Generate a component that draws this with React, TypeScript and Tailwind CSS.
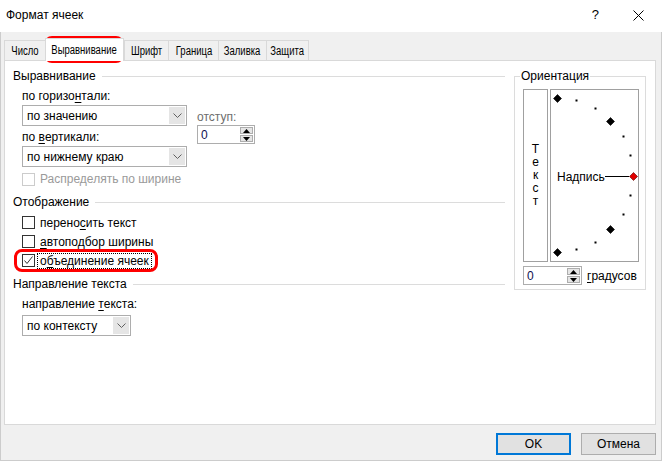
import React from "react";

function GroupHeader({ title }: { title: string }) {
  return (
    <div className="flex h-[16px] items-center">
      <span className="leading-[16px]">{title}</span>
      <div className="ml-[6px] h-px flex-1 bg-[#dcdcdc]" />
    </div>
  );
}

function Chevron() {
  return (
    <svg width="9" height="5" viewBox="0 0 9 5">
      <path d="M0.5 0.5 L4.5 4.5 L8.5 0.5" fill="none" stroke="#606060" strokeWidth="1" />
    </svg>
  );
}

function Select({ value, className }: { value: string; className: string }) {
  return (
    <div className={"flex h-[21px] border border-[#adadad] bg-white " + className}>
      <div className="flex flex-1 items-center pl-[4px] leading-none">{value}</div>
      <div className="m-[1px] flex w-[16px] items-center justify-center bg-[#e5e5e5]">
        <Chevron />
      </div>
    </div>
  );
}

function SpinArrows() {
  return (
    <div className="flex w-[15px] flex-col gap-[1px] p-[1px]">
      <div className="flex flex-1 items-center justify-center border border-[#adadad] bg-[#e5e5e5]">
        <svg width="7" height="4" viewBox="0 0 7 4">
          <path d="M3.5 0 L7 4 L0 4 Z" fill="#000" />
        </svg>
      </div>
      <div className="flex flex-1 items-center justify-center border border-[#adadad] bg-[#e5e5e5]">
        <svg width="7" height="4" viewBox="0 0 7 4">
          <path d="M0 0 L7 0 L3.5 4 Z" fill="#000" />
        </svg>
      </div>
    </div>
  );
}

function Spinner({ className }: { className: string }) {
  return (
    <div className={"flex h-[19px] border border-[#adadad] bg-white " + className}>
      <div className="flex flex-1 items-center pl-[3px] leading-none text-[#101050]">0</div>
      <SpinArrows />
    </div>
  );
}

function CheckBox({ checked, disabled }: { checked?: boolean; disabled?: boolean }) {
  return (
    <div
      className={
        "flex h-[13px] w-[13px] shrink-0 items-center justify-center border bg-white " +
        (disabled ? "border-[#cccccc]" : "border-[#333333]")
      }
    >
      {checked && (
        <svg width="11" height="11" viewBox="0 0 11 11">
          <path d="M1.5 5.5 L4 8.5 L9.5 1.5" fill="none" stroke="#333" strokeWidth="1" />
        </svg>
      )}
    </div>
  );
}

function Diamond({ x, y, r, fill }: { x: number; y: number; r: number; fill: string }) {
  return (
    <polygon
      points={`${x},${y - r} ${x + r},${y} ${x},${y + r} ${x - r},${y}`}
      fill={fill}
      stroke={fill === "#000" ? "#000" : "#500"}
      strokeWidth="0.6"
    />
  );
}

function Dial() {
  const large: [number, number][] = [
    [6, 8],
    [59, 31],
    [59, 139],
    [6, 162],
  ];
  const small: [number, number][] = [
    [25, 10],
    [44, 18],
    [72, 46],
    [79, 65],
    [79, 105],
    [72, 124],
    [44, 152],
    [25, 159],
  ];
  return (
    <svg width="87" height="171" viewBox="0 0 87 171">
      {large.map(([x, y], i) => (
        <Diamond key={i} x={x + 0.5} y={y + 0.5} r={4} fill="#000" />
      ))}
      {small.map(([x, y], i) => (
        <rect key={i} x={x - 0.5} y={y - 0.5} width="2" height="2" fill="#000" />
      ))}
      <text x="6" y="90.5" fontSize="12" fontFamily="'Liberation Sans', Arial, sans-serif" fill="#000">
        Надпись
      </text>
      <line x1="54" y1="86.5" x2="78" y2="86.5" stroke="#000" strokeWidth="1" />
      <Diamond x={82.5} y={86.5} r={4} fill="#e00000" />
    </svg>
  );
}

const tabs: { label: string; w: string }[] = [
  { label: "Число", w: "w-[41px]" },
  { label: "Выравнивание", w: "w-[79px]" },
  { label: "Шрифт", w: "w-[44px]" },
  { label: "Граница", w: "w-[50px]" },
  { label: "Заливка", w: "w-[48px]" },
  { label: "Защита", w: "w-[43px]" },
];

export default function App() {
  return (
    <div className="relative flex h-[461px] w-[662px] flex-col bg-[#f0f0f0] font-['Liberation_Sans',Arial,sans-serif] text-[12px] text-black">
      {/* Title bar */}
      <div className="flex h-[32px] items-center bg-white pb-[2px] pl-[6px]">
        <span className="flex-1">Формат ячеек</span>
        <span className="mr-[34px] text-[13px]">?</span>
        <svg width="11" height="11" viewBox="0 0 11 11" className="mr-[18px]">
          <path d="M0.5 0.5 L10.5 10.5 M10.5 0.5 L0.5 10.5" stroke="#000" strokeWidth="1" />
        </svg>
      </div>

      {/* Body */}
      <div className="flex flex-1 flex-col border-b border-l border-r border-[#cccccc] pl-[3px] pr-[5px]">
        {/* Tabs */}
        <div className="relative z-10 mt-[6px] flex h-[22px] items-end">
          {tabs.map((t, i) => {
            const sel = i === 1;
            return (
              <div
                key={t.label}
                className={
                  "flex items-center justify-center overflow-visible whitespace-nowrap border-l border-t border-[#d9d9d9] pt-[1px] text-[12.5px] " +
                  t.w +
                  (sel
                    ? " -mb-[1px] h-[23px] border-r bg-white pb-[1px]"
                    : " h-[20px] bg-[#f0f0f0]") +
                  (i === tabs.length - 1 ? " border-r" : "")
                }
              >
                <span className="inline-block origin-center scale-x-[0.76]">{t.label}</span>
              </div>
            );
          })}
        </div>

        {/* Panel */}
        <div className="flex h-[365px] w-[652px] border border-[#d9d9d9] bg-white pl-[8px] pt-[7px]">
          {/* Left column */}
          <div className="flex w-[492px] flex-col">
            <GroupHeader title="Выравнивание" />
            <div className="flex flex-col pl-[9px]">
              <div className="mt-[4px] flex h-[16px] items-center">
                по горизо<u className="underline-offset-[2px]">н</u>тали:
              </div>
              <div className="flex">
                <div className="flex w-[165px] flex-col">
                  <Select value="по значению" className="mt-[1px] w-[165px]" />
                  <div className="mt-[3px] flex h-[16px] items-center">
                    по&nbsp;<u className="underline-offset-[2px]">в</u>ертикали:
                  </div>
                  <Select value="по нижнему краю" className="mt-[1px] w-[165px]" />
                </div>
                <div className="ml-[10px] flex flex-col pt-[5px]">
                  <div className="flex h-[16px] items-center text-[#6d6d6d]">отступ:</div>
                  <Spinner className="w-[58px]" />
                </div>
              </div>
              <div className="mt-[4px] flex h-[16px] items-center">
                <CheckBox disabled />
                <span className="ml-[5px] text-[#9a9a9a]">Распределять по ширине</span>
              </div>
            </div>

            <div className="mt-[7px]">
              <GroupHeader title="Отображение" />
            </div>
            <div className="mt-[3px] flex flex-col pl-[9px]">
              <div className="flex h-[19px] items-center">
                <CheckBox />
                <span className="ml-[2px] border border-transparent px-[2px] leading-[14px]">
                  перено<u className="underline-offset-[2px]">с</u>ить текст
                </span>
              </div>
              <div className="flex h-[19px] items-center">
                <CheckBox />
                <span className="ml-[2px] border border-transparent px-[2px] leading-[14px]">
                  <u className="underline-offset-[2px]">а</u>втоподбор ширины
                </span>
              </div>
              <div className="flex h-[19px] items-center">
                <CheckBox checked />
                <span className="ml-[2px] border border-dotted border-black px-[2px] leading-[14px]">
                  о<u className="underline-offset-[2px]">б</u>ъединение ячеек
                </span>
              </div>
            </div>

            <div className="mt-[6px]">
              <GroupHeader title="Направление текста" />
            </div>
            <div className="flex flex-col pl-[9px]">
              <div className="mt-[4px] flex h-[16px] items-center">
                направление&nbsp;<u className="underline-offset-[2px]">т</u>екста:
              </div>
              <Select value="по контексту" className="mt-[3px] w-[109px]" />
            </div>
          </div>

          {/* Right column: orientation */}
          <fieldset className="ml-[9px] w-[132px] self-start border border-[#dcdcdc] p-0">
            <legend className="ml-[5px] h-[16px] px-[1px] leading-[16px]">Ориентация</legend>
            <div className="flex flex-col pb-[4px] pl-[8px] pt-[5px]">
              <div className="flex gap-[2px]">
                <div className="flex h-[173px] w-[25px] flex-col items-center justify-center border border-[#a0a0a0] leading-[13px]">
                  <span>Т</span>
                  <span>е</span>
                  <span>к</span>
                  <span>с</span>
                  <span>т</span>
                </div>
                <div className="h-[173px] w-[89px] border border-[#a0a0a0]">
                  <Dial />
                </div>
              </div>
              <div className="mt-[4px] flex items-center">
                <Spinner className="w-[59px]" />
                <span className="ml-[5px]">
                  <u className="underline-offset-[2px]">г</u>радусов
                </span>
              </div>
            </div>
          </fieldset>
        </div>

        {/* Buttons */}
        <div className="mt-[8px] flex justify-end gap-[10px]">
          <div className="flex h-[22px] w-[75px] items-center justify-center border-2 border-[#0078d7] bg-[#e1e1e1]">
            OK
          </div>
          <div className="flex h-[22px] w-[75px] items-center justify-center border border-[#adadad] bg-[#e1e1e1]">
            Отмена
          </div>
        </div>
      </div>

      {/* Red highlights */}
      <div className="pointer-events-none absolute left-[44px] top-[36px] h-[27px] w-[80px] rounded-[8px] border-[3px] border-[#ff0000]" />
      <div className="pointer-events-none absolute left-[14px] top-[249px] h-[23px] w-[144px] rounded-[8px] border-[3px] border-[#ff0000]" />
    </div>
  );
}
